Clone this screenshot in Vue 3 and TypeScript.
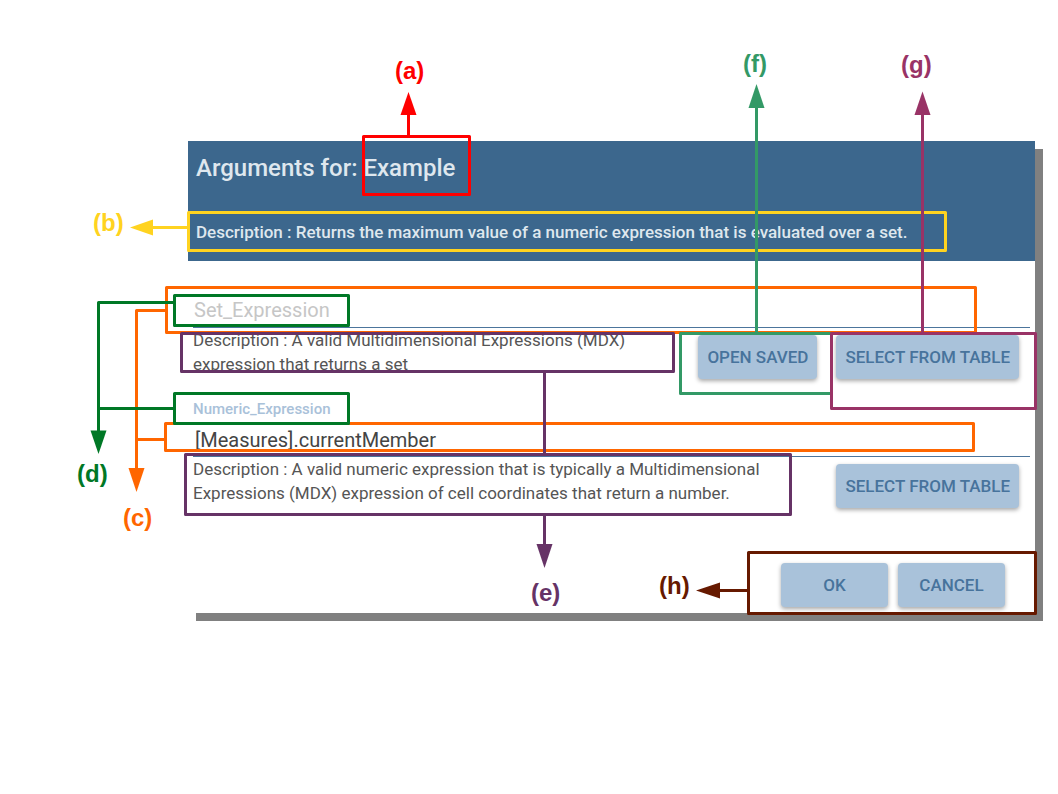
<script setup lang="ts">
import { ref } from 'vue'

interface Field {
  id: string
  name: string
  description: string
  actions: string[]
}

interface Callout {
  key: string
  color: string
  text: [number, number]
  lines: string
  head: string
}

const fields: Field[] = [
  {
    id: 'set-expression',
    name: 'Set_Expression',
    description: 'A valid Multidimensional Expressions (MDX) expression that returns a set',
    actions: ['OPEN SAVED', 'SELECT FROM TABLE'],
  },
  {
    id: 'numeric-expression',
    name: 'Numeric_Expression',
    description:
      'A valid numeric expression that is typically a Multidimensional Expressions (MDX) expression of cell coordinates that return a number.',
    actions: ['SELECT FROM TABLE'],
  },
]

const values = ref<string[]>(['', '[Measures].currentMember'])

const box = (x1: number, y1: number, x2: number, y2: number): string =>
  `M${x1} ${y1}H${x2}V${y2}H${x1}Z`

const callouts: Callout[] = [
  {
    key: 'a', color: '#ff0000', text: [395, 79],
    lines: box(363.5, 136.5, 469.5, 194.5) + 'M408.5 136V114',
    head: '408.5,92 416.5,115 400.5,115',
  },
  {
    key: 'b', color: '#ffd320', text: [93, 231],
    lines: box(188.5, 212.5, 945.5, 250.5) + 'M188 227.5H152',
    head: '130,227.5 153,219.5 153,235.5',
  },
  {
    key: 'c', color: '#ff6600', text: [123, 526],
    lines: box(166.5, 287.5, 975.5, 332.5) + box(165.5, 423.5, 973.5, 450.5) +
      'M166 310.5H136.5V470M136.5 439.5H165',
    head: '136.5,492 144.5,468 128.5,468',
  },
  {
    key: 'd', color: '#007826', text: [77, 482],
    lines: box(174.5, 295.5, 348.5, 325.5) + box(174.5, 393.5, 348.5, 423.5) +
      'M174 302.5H98.5V432M98.5 408.5H174',
    head: '98.5,454 106.5,430.5 90.5,430.5',
  },
  {
    key: 'e', color: '#663366', text: [531, 601],
    lines: box(181.5, 333.5, 673.5, 371.5) + box(185.5, 454.5, 790.5, 514.5) +
      'M544.5 372V454M544.5 515V546',
    head: '544.5,568 552.5,544 536.5,544',
  },
  {
    key: 'f', color: '#339966', text: [743, 72],
    lines: box(680.5, 333.5, 831.5, 393.5) + 'M756.5 333V106',
    head: '756.5,84 764.5,108 748.5,108',
  },
  {
    key: 'g', color: '#993366', text: [901, 73],
    lines: box(831.5, 333.5, 1035.5, 408.5) + 'M922.5 333V113',
    head: '922.5,91.5 930.5,115 914.5,115',
  },
  {
    key: 'h', color: '#661900', text: [659, 594],
    lines: box(748.5, 552.5, 1035.5, 613.5) + 'M748 590.5H718',
    head: '696,590.5 720,582.5 720,598.5',
  },
]
</script>

<template>
  <main class="stage">
    <form class="dialog" @submit.prevent>
      <header class="head">
        <h1 class="title">Arguments for: Example</h1>
        <p class="summary">
          Description : Returns the maximum value of a numeric expression that is evaluated over a set.
        </p>
      </header>

      <section v-for="(field, i) in fields" :key="field.id" class="field">
        <div class="control">
          <label class="label" :class="{ resting: !values[i] }" :for="field.id">{{ field.name }}</label>
          <input :id="field.id" v-model="values[i]" class="input" type="text" />
        </div>
        <div class="detail">
          <p class="description">Description : {{ field.description }}</p>
          <button v-for="action in field.actions" :key="action" class="button" type="button">
            {{ action }}
          </button>
        </div>
      </section>

      <footer class="foot">
        <button class="button wide" type="submit">OK</button>
        <button class="button wide" type="button">CANCEL</button>
      </footer>
    </form>

    <svg class="callouts">
      <g v-for="c in callouts" :key="c.key">
        <path :d="c.lines" :stroke="c.color" fill="none" stroke-width="3" stroke-linejoin="round" />
        <polygon :points="c.head" :fill="c.color" />
        <text :x="c.text[0]" :y="c.text[1]" :fill="c.color">({{ c.key }})</text>
      </g>
    </svg>
  </main>
</template>

<style>
body {
  margin: 0;
  background: #fff;
}
</style>

<style scoped>
.stage {
  position: relative;
  box-sizing: border-box;
  min-height: 100vh;
  padding: 141px 23px 0 188px;
  font-family: Roboto, "Liberation Sans", sans-serif;
}

.dialog {
  background: #fff;
  box-shadow: 8px 8px 0 #808080;
}

.head {
  display: flex;
  flex-direction: column;
  gap: 38px;
  padding: 13px 8px 17px;
  background: #3c678d;
  color: #dfe7ee;
}

.title {
  margin: 0;
  font-size: 24px;
  font-weight: 500;
  line-height: 28px;
}

.summary {
  margin: 0;
  font-size: 17px;
  font-weight: 500;
  line-height: 24px;
}

.field {
  padding: 0 5px;
}

.control {
  position: relative;
  display: flex;
  flex-direction: column;
  justify-content: flex-end;
  height: 67px;
}

.label {
  padding-bottom: 4px;
  color: #a9c1d9;
  font-size: 15px;
  font-weight: 500;
  line-height: 20px;
}

.label.resting {
  position: absolute;
  bottom: 1px;
  left: 1px;
  padding: 0;
  color: #c6c6c6;
  font-size: 20px;
  font-weight: 400;
  line-height: 33px;
}

.input {
  box-sizing: border-box;
  width: 100%;
  height: 34px;
  padding: 0 2px;
  border: 0;
  border-bottom: 1px solid #4c759c;
  outline: 0;
  background: transparent;
  color: #444;
  font: 400 20px/33px Roboto, "Liberation Sans", sans-serif;
}

.detail {
  display: flex;
  align-items: flex-start;
  gap: 19px;
  min-height: 62px;
  padding-right: 11px;
}

.description {
  flex: 1;
  margin: 0;
  color: #555;
  font-size: 17px;
  line-height: 24px;
}

.button {
  height: 44px;
  padding: 0 9px;
  border: 0;
  border-radius: 4px;
  background: #a9c2da;
  box-shadow: 0 2px 4px rgba(0, 0, 0, 0.35);
  color: #47739c;
  font: 500 17px/24px Roboto, "Liberation Sans", sans-serif;
  white-space: nowrap;
}

.detail .button {
  margin-top: 7px;
}

.wide {
  width: 107px;
}

.foot {
  display: flex;
  justify-content: flex-end;
  gap: 10px;
  padding: 44px 30px 6px;
}

.callouts {
  position: absolute;
  top: 0;
  left: 0;
  width: 100%;
  height: 100%;
  pointer-events: none;
}

.callouts text {
  font: bold 24px "Liberation Sans", Arial, sans-serif;
}
</style>
